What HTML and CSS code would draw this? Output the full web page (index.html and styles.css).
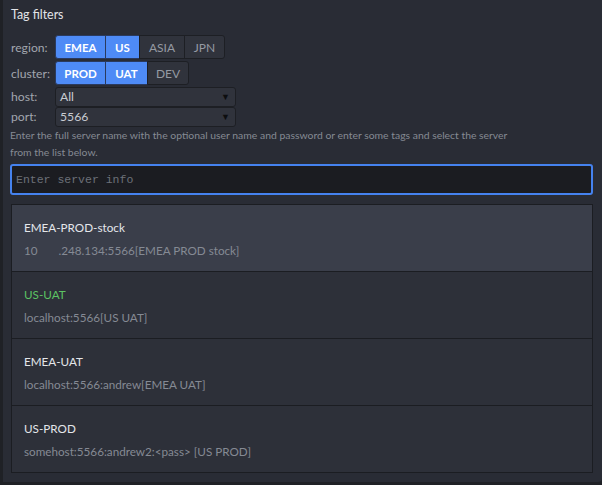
FILE: index.html
```html
<!DOCTYPE html>
<html>
<head>
<meta charset="utf-8">
<link rel="stylesheet" href="styles.css">
</head>
<body>
<div class="panel">
  <div class="title">Tag filters</div>
  <div class="filters">
    <div class="frow">
      <span class="flabel">region:</span>
      <div class="group">
        <span class="btn on w-emea">EMEA</span><span class="btn on w-us">US</span><span class="btn w-asia">ASIA</span><span class="btn w-jpn">JPN</span>
      </div>
    </div>
    <div class="frow">
      <span class="flabel">cluster:</span>
      <div class="group">
        <span class="btn on w-emea">PROD</span><span class="btn on w-uat">UAT</span><span class="btn w-dev">DEV</span>
      </div>
    </div>
    <div class="frow srow">
      <span class="flabel">host:</span>
      <div class="select"><span>All</span><span class="arrow">▼</span></div>
    </div>
    <div class="frow srow">
      <span class="flabel">port:</span>
      <div class="select"><span>5566</span><span class="arrow">▼</span></div>
    </div>
  </div>
  <p class="help">Enter the full server name with the optional user name and password or enter some tags and select the server from the list below.</p>
  <div class="input">Enter server info</div>
  <ul class="list">
    <li class="item sel"><div class="name">EMEA-PROD-stock</div><div class="sub">10&nbsp;&nbsp;&nbsp;&nbsp;&nbsp;&nbsp;&nbsp;.248.134:5566[EMEA PROD stock]</div></li>
    <li class="item"><div class="name green">US-UAT</div><div class="sub">localhost:5566[US UAT]</div></li>
    <li class="item"><div class="name">EMEA-UAT</div><div class="sub">localhost:5566:andrew[EMEA UAT]</div></li>
    <li class="item"><div class="name">US-PROD</div><div class="sub">somehost:5566:andrew2:&lt;pass&gt; [US PROD]</div></li>
  </ul>
</div>
</body>
</html>
```
FILE: styles.css
```css
html, body {
  margin: 0;
  padding: 0;
  background: #1f2126;
  width: 602px;
  height: 485px;
  overflow: hidden;
  font-family: Lato, "Noto Sans", sans-serif;
}
.panel {
  margin: 0 0 3px 3px;
  height: 482px;
  box-sizing: border-box;
  background: #292c35;
  border-bottom-right-radius: 4px;
  padding: 5px 9px 0 7px;
}
.title {
  color: #e2e4e8;
  font-size: 12.4px;
  line-height: 20px;
  padding-left: 1px;
}
.filters {
  margin-top: 10px;
  display: flex;
  flex-direction: column;
  gap: 2px;
}
.frow {
  display: flex;
  align-items: center;
  height: 24px;
}
.srow { height: 19px; margin-top: 0; }
.srow + .srow { margin-top: -1px; }
.flabel {
  width: 44px;
  padding-left: 1px;
  color: #a2a6ae;
  font-size: 12.2px;
}
.group {
  display: flex;
  height: 24px;
}
.btn {
  box-sizing: border-box;
  height: 24px;
  display: flex;
  align-items: center;
  justify-content: center;
  background: #30333c;
  color: #959aa3;
  font-size: 12px;
  border: 1px solid #1d1f24;
  margin-left: -1px;
}
.btn:first-child { margin-left: 0; border-radius: 3px 0 0 3px; }
.btn:last-child { border-radius: 0 3px 3px 0; }
.btn.on {
  background: #4e8bf6;
  color: #ffffff;
  font-weight: 700;
  font-size: 11.5px;
  border-color: #2a3a5e;
}
.w-emea { width: 51px; }
.w-us { width: 35px; }
.w-asia { width: 46px; }
.w-jpn { width: 41px; }
.w-uat { width: 43px; }
.w-dev { width: 42px; }
.select {
  box-sizing: border-box;
  width: 181px;
  height: 20px;
  background: #30333c;
  border: 1px solid #1d1f24;
  border-radius: 3px;
  display: flex;
  align-items: center;
  justify-content: space-between;
  padding: 0 5px 0 4px;
  color: #c9ccd2;
  font-size: 12.2px;
}
.arrow {
  color: #0d0e10;
  font-size: 9px;
}
.help {
  margin: 1px 0 0 0;
  color: #858a93;
  font-size: 10.4px;
  line-height: 17px;
  width: 510px;
}
.input {
  margin-top: 3px;
  box-sizing: border-box;
  height: 31px;
  border: 2px solid #4582ef;
  border-radius: 3px;
  background: #1b1c21;
  color: #6c7078;
  font-family: "Liberation Mono", "DejaVu Sans Mono", monospace;
  font-size: 11.5px;
  display: flex;
  align-items: center;
  padding-left: 4px;
}
.list {
  list-style: none;
  margin: 9px 0 0 1px;
  padding: 0;
  border: 1px solid #1b1d22;
  width: 582px;
  box-sizing: border-box;
}
.item {
  height: 67px;
  box-sizing: border-box;
  background: #2d3039;
  border-top: 1px solid #1b1d22;
  padding: 14px 0 0 12px;
}
.item:first-child { border-top: none; height: 66px; }
.item.sel { background: #3a3e4a; }
.name {
  color: #e4e6ea;
  font-size: 11.7px;
  line-height: 17px;
}
.name.green { color: #5cc363; }
.sub {
  margin-top: 6px;
  color: #858a94;
  font-size: 11.7px;
  line-height: 17px;
}
```
